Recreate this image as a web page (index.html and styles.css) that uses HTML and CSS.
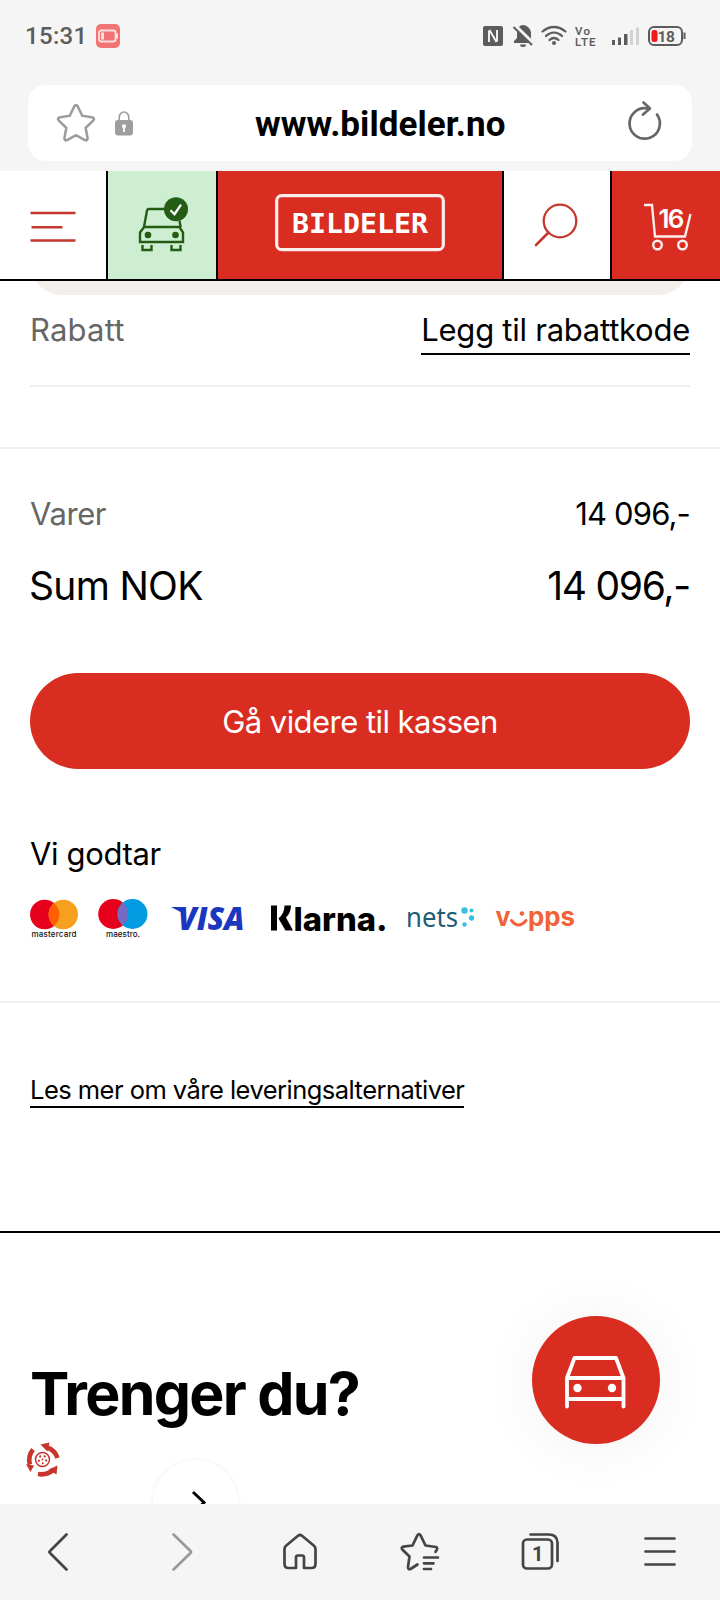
FILE: index.html
```html
<!DOCTYPE html>
<html lang="no">
<head>
<meta charset="utf-8">
<title>Bildeler</title>
<link rel="stylesheet" href="styles.css">
</head>
<body>
<div class="screen">
  <header class="chrome">
    <div class="status">
      <span class="clock">15:31</span>
      <svg class="low" width="24" height="24" viewBox="0 0 24 24"><rect width="24" height="24" rx="5" fill="#f27373"/><rect x="3" y="6.500" width="16.500" height="11" rx="2" fill="none" stroke="#fde0e0" stroke-width="1.800"/><rect x="5" y="8.500" width="3" height="7" fill="#fde0e0"/><rect x="20" y="9.500" width="2" height="5" fill="#fde0e0"/></svg>
      <svg class="tray" width="206" height="24" viewBox="482 24 206 24">
        <rect x="483" y="26" width="20" height="20" rx="2" fill="#5c5c5c"/>
        <path d="M489 42V30.500M489.500 30l7 12M497 41.500V30" fill="none" stroke="#f5f5f5" stroke-width="1.900"/>
        <path d="M514 43v-2l3-3v-5c0-5 3-8 6-8s8 3 8 8v6l3 4z" fill="#5c5c5c"/><path d="M520 44.500h6a3 2.500 0 0 1-6 0z" fill="#5c5c5c"/>
        <path d="M514.500 25.500l18.500 18" stroke="#f5f5f5" stroke-width="4"/><path d="M513.500 27l18.500 18" stroke="#5c5c5c" stroke-width="2"/>
        <g fill="none" stroke="#5c5c5c" stroke-width="2.300" stroke-linecap="round"><path d="M542.500 31.500c7-6 16-6 23 0M546 36c5-4.500 11-4.500 16 0M549.500 40c3-2.600 6-2.600 9 0"/></g><circle cx="554" cy="43" r="2" fill="#5c5c5c"/>
        <text x="575" y="34.500" class="tiny" textLength="15">Vo</text><text x="575" y="45.500" class="tiny" textLength="20.500">LTE</text>
        <path d="M612 40h3v5h-3zM618 37.500h3v7.500h-3zM624 34h3.500v11H624z" fill="#5c5c5c"/><path d="M630 30h3v15h-3zM636 27.500h3v17.500h-3z" fill="#d2d2d2"/>
        <rect x="649" y="27" width="33" height="18" rx="5" fill="none" stroke="#5c5c5c" stroke-width="2"/><rect x="651.500" y="30" width="6" height="12" rx="2.500" fill="#ee1c1c"/><path d="M684.500 32.500v6.500" stroke="#5c5c5c" stroke-width="2"/>
        <text x="657.500" y="41.500" class="pct" textLength="17.500">18</text>
      </svg>
    </div>
    <div class="address">
      <svg class="star" width="40" height="40" viewBox="0 0 40 40"><path d="M18.200 3.500q1.800-3 3.600 0l4.400 9.200 10.500 1.700q2.200 1 .6 2.900l-7.600 7.600 1.900 10.600q-.4 2.500-2.700 1.600L20 32.200l-8.900 4.900q-2.300.9-2.700-1.600l1.900-10.600-7.600-7.600q-1.600-1.900.6-2.900l10.500-1.700z" fill="none" stroke="#9c9c9c" stroke-width="2.600"/></svg>
      <svg class="lock" width="18" height="25" viewBox="0 0 18 25"><path d="M4.200 10V6.500a4.800 5.500 0 0 1 9.600 0V10" fill="none" stroke="#9e9e9e" stroke-width="1.600"/><rect y="9" width="18" height="15.500" rx="3" fill="#9e9e9e"/><circle cx="9" cy="15.300" r="2" fill="#fff"/><path d="M9 15v6" stroke="#fff" stroke-width="1.800"/></svg>
      <span class="url">www.bildeler.no</span>
      <svg class="reload" width="36" height="42" viewBox="0 0 36 42"><path d="M30 14.500A15.200 15.200 0 1 1 20.500 8.500M16.500 2.500l6.500 6-7 6" fill="none" stroke="#666" stroke-width="2.700" stroke-linecap="round" stroke-linejoin="round"/></svg>
    </div>
  </header>

  <nav class="nav">
    <div class="cell"><svg width="46" height="32" viewBox="0 0 46 32"><path d="M0.500 2h45M1.500 16.300h31M0.500 29.500h45" stroke="#c4382e" stroke-width="2.500"/></svg></div>
    <div class="cell green"><svg width="50" height="56" viewBox="0 0 50 56"><g fill="none" stroke="#245c14" stroke-width="2.400"><path d="M6 30l3-16.500q.4-1.500 2-1.500H26M41.500 24l1.200 6M6 30h37M6.500 29.500L2 35.500V45h43V35.500L41.500 30M4.500 48v5h9v-5M33.500 48v5h9v-5"/></g><circle cx="10" cy="38" r="3.300" fill="#245c14"/><circle cx="37.500" cy="38" r="3.300" fill="#245c14"/><circle cx="38" cy="12.200" r="12" fill="#245c14"/><path d="M32.500 13.200l4 4 6.500-9.500" fill="none" stroke="#fff" stroke-width="2.300"/></svg></div>
    <div class="cell red brand"><svg width="170" height="58" viewBox="0 0 170 58"><rect x="1.700" y="1.700" width="166.600" height="54" rx="5" fill="none" stroke="#fdeeee" stroke-width="3.200"/><text x="17" y="38.500" class="logo" textLength="136" lengthAdjust="spacingAndGlyphs">BILDELER</text></svg></div>
    <div class="cell"><svg width="44" height="44" viewBox="0 0 44 44"><circle cx="25" cy="18" r="16.300" fill="none" stroke="#c4382e" stroke-width="2.300"/><path d="M13.500 29.500L1 42" stroke="#c4382e" stroke-width="2.600" stroke-linecap="round"/></svg></div>
    <div class="cell red"><svg width="50" height="48" viewBox="0 0 50 48"><g fill="none" stroke="#fdeeee" stroke-width="2.400"><path d="M1 2h8l3 31.500h30L47.500 11"/><circle cx="14.500" cy="42" r="4.300"/><circle cx="39.500" cy="42" r="4.300"/></g><text x="15.500" y="24.500" class="count" textLength="26">16</text></svg></div>
  </nav>

  <main class="page">
    <div class="basket"><div class="basket-card"></div></div>
    <section class="discount">
      <div class="row discount-row"><span class="muted">Rabatt</span><a class="link code">Legg til rabattkode</a></div>
    </section>
    <section class="summary">
      <div class="row"><span class="muted varer">Varer</span><span class="price">14 096,-</span></div>
      <div class="row total"><span class="sum">Sum NOK</span><span class="sum-price">14 096,-</span></div>
      <button class="checkout">Gå videre til kassen</button>
      <div class="accept">Vi godtar</div>
      <div class="payments">
        <svg width="48" height="40" viewBox="0 0 48 40"><circle cx="14.700" cy="16.500" r="14.700" fill="#e6001c"/><circle cx="33.300" cy="16.500" r="14.700" fill="#f5a01e"/><path d="M24 5.100a14.700 14.700 0 0 1 0 22.800a14.700 14.700 0 0 1 0-22.800z" fill="#ff6000"/><text x="1.500" y="38.500" class="card" textLength="45">mastercard</text></svg>
        <svg class="maestro" width="50" height="40" viewBox="0 0 50 40"><circle cx="15.200" cy="16" r="15" fill="#e6001c"/><circle cx="34.500" cy="16" r="15" fill="#009be1"/><path d="M24.850 4.500a15 15 0 0 1 0 23a15 15 0 0 1 0-23z" fill="#766bc0"/><text x="8" y="38.500" class="card" textLength="34">maestro.</text></svg>
        <svg class="visa" width="75" height="40" viewBox="0 0 75 40"><path d="M1 9h9.500l2 6z" fill="#1b37bd"/><text x="8" y="31.500" class="visa-text" textLength="66.500" lengthAdjust="spacingAndGlyphs">VISA</text></svg>
        <svg class="klarna" width="118" height="40" viewBox="0 0 118 40"><path d="M1 7.500h6v25H1zM14.500 7.500h6.500c0 5-1.700 9-5 12l7 13h-7.500L8.500 20.500c4-3.500 6-7.500 6-13z"/><text x="23.500" y="32.500" class="klarna-text" textLength="94" lengthAdjust="spacingAndGlyphs">larna.</text></svg>
        <svg class="nets" width="70" height="40" viewBox="0 0 70 40"><text x="0" y="29" class="nets-text" textLength="52" lengthAdjust="spacingAndGlyphs">nets</text><g fill="#35bfe3"><circle cx="58.500" cy="12.500" r="3.200"/><circle cx="65.500" cy="12.500" r="2"/><circle cx="65.500" cy="20" r="2.700"/><circle cx="58.500" cy="26.500" r="2.200"/></g></svg>
        <svg class="vipps" width="80" height="40" viewBox="0 0 80 40"><g class="vipps-text"><text x="-0.500" y="28" textLength="15" lengthAdjust="spacingAndGlyphs">v</text><text x="32" y="28" textLength="47" lengthAdjust="spacingAndGlyphs">pps</text></g><path d="M15.500 22.500q7 9 14.500 0" fill="none" stroke="#f26238" stroke-width="3" stroke-linecap="round"/><circle cx="26" cy="15.500" r="2.200" fill="#f26238"/></svg>
      </div>
    </section>
    <section class="delivery"><a class="link delivery-link">Les mer om våre leveringsalternativer</a></section>
    <section class="need">
      <h2>Trenger du?</h2>
      <div class="peek">
        <svg class="wheel" width="34" height="36" viewBox="0 0 34 36"><g fill="none" stroke="#c9352a" stroke-width="4.600"><path d="M20 5q9 3 11.500 11M7 7.500q-5.500 7-3 15M12 32q9 1.500 15-4"/></g><g fill="#c9352a"><path d="M14.500 2.500l9-2-2 9zM0 22l8 1.500-3.500 6.500zM31.500 23.500l-1 9-8-5z"/></g><circle cx="16.500" cy="17.500" r="7" fill="none" stroke="#c9352a" stroke-width="1.500"/><circle cx="16.500" cy="17.500" r="3.800" fill="none" stroke="#c9352a" stroke-width="2" stroke-dasharray="1.800 2.900"/><circle cx="16.500" cy="17.500" r="0.900" fill="#c9352a"/></svg>
        <div class="round"><svg width="16" height="26" viewBox="0 0 16 26"><path d="M2 2l11 10.500L2 24" fill="none" stroke="#000" stroke-width="3"/></svg></div>
      </div>
      <div class="fab"><svg width="62" height="54" viewBox="0 0 62 54"><g fill="none" stroke="#fff" stroke-width="3.800" stroke-linecap="round" stroke-linejoin="round"><path d="M3 23L10.500 3h41.500l7.500 20v28.500M3 23h56.500M3 23v28.500M3 44h56.500"/></g><circle cx="13.500" cy="33" r="4.200" fill="#fff"/><circle cx="48" cy="33" r="4.200" fill="#fff"/></svg></div>
    </section>
  </main>

  <footer class="toolbar">
    <svg viewBox="0 0 40 40"><path d="M26.500 2.500L10 19q-1 1 0 2l16.500 16.500"/></svg>
    <svg class="dim" viewBox="0 0 40 40"><path d="M13.500 2.500L30.500 19q1 1 0 2L13.500 37.500"/></svg>
    <svg viewBox="0 0 40 40"><path d="M16 36V25.500q0-2 2-2h4q2 0 2 2V36h7.500q4 0 4-4V17q0-2-1.500-3.300L22 3.800q-2-1.600-4 0L6 13.700Q4.500 15 4.500 17v15q0 4 4 4z"/></svg>
    <svg viewBox="0 0 40 40"><path d="M17.500 32.500l-7 4.500q-2.500 1-2.500-2l1.500-10.500L2.300 17.500q-1.500-2 .8-2.800L12.500 13.500l5-10.300q1.500-2 3 0l5 10.300 10.500 1.500q1.800.8.900 2.800l-1.400 2M24 25.500h14M24 31.300h9.500M24 37h7"/></svg>
    <svg viewBox="0 0 40 40"><rect x="3" y="7.500" width="29" height="29" rx="4"/><path d="M10.500 2.500H29q8 0 8.500 8V29"/><text x="12" y="29" class="tab-count">1</text></svg>
    <svg viewBox="0 0 40 40"><path d="M5.500 6.500h29M5.500 19.500h29M5.500 32.500h29"/></svg>
  </footer>
</div>
</body>
</html>
```
FILE: styles.css
```css
* { box-sizing: border-box; }
body { margin: 0; background: #fff; color: #000; font-family: Inter, "Liberation Sans", sans-serif; }
svg { display: block; flex: none; overflow: visible; }
.screen { width: 720px; height: 1600px; display: flex; flex-direction: column; overflow: hidden; }

.chrome { flex: none; height: 171px; background: #f5f5f5; padding: 24px 28px 0; }
.status { display: flex; height: 24px; align-items: center; margin: 0 4px 0 -3px; }
.clock { font: 500 24px/24px Roboto, sans-serif; color: #5c5c5c; width: 71px; letter-spacing: 0.3px; }
.tray { margin-left: auto; }
.tiny { font: 500 11.500px Roboto, sans-serif; fill: #5c5c5c; stroke: #5c5c5c; stroke-width: 0.100px; }
.pct { font: 700 15.500px Roboto, sans-serif; fill: #5c5c5c; }
.address { display: flex; align-items: center; height: 76px; margin-top: 37px; padding: 0 29px 0 28px; border-radius: 18px; background: #fff; }
.lock { margin-left: 19px; }
.url { flex: 1; padding: 4px 0 0 122px; font: 700 35px/40px Roboto, sans-serif; letter-spacing: 0.050px; white-space: nowrap; }
.reload { margin: -4px 0 0; }

.nav { flex: none; display: grid; grid-template-columns: 106px 110px 286px 108px 110px; height: 110px; border-bottom: 2px solid #000; }
.cell { display: flex; align-items: center; justify-content: center; }
.cell + .cell { border-left: 2px solid #000; }
.cell:first-child { padding-top: 4px; }
.green { background: #cdeed0; padding-left: 1px; }
.red { background: #da2d21; }
.brand { padding-bottom: 4px; }
.cell:nth-child(5) { padding: 4px 0 0 4px; }
.logo { font: 700 27px "DejaVu Sans Mono", monospace; fill: #fff; }
.count { font: 600 26px Inter, sans-serif; fill: #fff; }

.page { flex: 1; min-height: 0; overflow: hidden; }
.basket { height: 14px; margin: 0 30px; overflow: hidden; display: flex; align-items: flex-end; }
.basket-card { flex: 1 0 0; height: 64px; background: #f3f0eb; border-radius: 32px; }
.row { display: flex; justify-content: space-between; font-size: 31px; line-height: 42px; height: 40px; }
.discount { height: 154px; padding: 14px 30px 0; border-bottom: 2px solid #f1f0ed; }
.discount-row { height: 78px; border-bottom: 2px solid #f3f0eb; align-items: flex-start; }
.muted { color: #666; letter-spacing: 0.200px; }
.varer { letter-spacing: -0.4px; }
.link { border-bottom: 2px solid #000; white-space: nowrap; }
.code { height: 46px; letter-spacing: -0.250px; }
.summary { height: 554px; padding: 44px 30px 0; border-bottom: 2px solid #f0f0ee; }
.price { letter-spacing: -0.850px; }
.total { margin-top: 29px; height: 48px; font-size: 39px; line-height: 48px; letter-spacing: -0.700px; }
.sum { margin-left: -1px; }
.sum-price { letter-spacing: -1.250px; }
.checkout { display: block; width: 660px; height: 96px; margin-top: 63px; padding: 2px 0 0; border: 0; border-radius: 48px; background: #da2d21; color: #fff; font: 400 31px/40px Inter, sans-serif; letter-spacing: -0.550px; }
.accept { margin-top: 64px; height: 40px; font-size: 31px; line-height: 42px; letter-spacing: -0.350px; }
.payments { display: flex; margin-top: 25px; height: 40px; }
.maestro { margin-left: 20px; }
.visa { margin-left: 22px; }
.klarna { margin-left: 25px; }
.nets { margin-left: 18px; }
.vipps { margin-left: 20px; }
.card { font: 500 8px Inter, sans-serif; fill: #111; }
.visa-text { font: italic 800 31px "Open Sans", sans-serif; fill: #1b37bd; }
.klarna-text { font: 800 33px Inter, sans-serif; }
.nets-text { font: 400 28px "Noto Sans", sans-serif; fill: #1f5c78; }
.vipps-text { font: 700 26px Inter, sans-serif; fill: #f26238; }
.delivery { height: 230px; padding: 71px 30px 0; border-bottom: 2px solid #000; }
.delivery-link { display: inline-block; font-size: 25.500px; line-height: 32px; letter-spacing: -0.530px; }
.need { position: relative; padding: 125px 30px 0; }
h2 { margin: 0; font-size: 59px; line-height: 72px; font-weight: 700; letter-spacing: -1.700px; }
.peek { position: relative; height: 80px; padding-top: 12px; }
.wheel { margin-left: -4px; }
.round { position: absolute; left: 123px; top: 30px; width: 85px; height: 86px; border-radius: 50%; background: #fff; box-shadow: 0 0 5px rgba(0,0,0,.07); padding: 30px 0 0 38px; }
.fab { position: absolute; left: 532px; top: 83px; width: 128px; height: 128px; border-radius: 50%; background: #da2d21; display: flex; align-items: center; justify-content: center; padding: 4px 2px 0 0; box-shadow: 0 2px 60px rgba(0,0,0,.06); }

.toolbar { flex: none; height: 96px; background: #f5f5f5; display: grid; grid-template-columns: repeat(6, 120px); justify-items: center; padding-top: 28px; }
.toolbar svg { width: 40px; height: 40px; fill: none; stroke: #444; stroke-width: 2.700; stroke-linecap: round; stroke-linejoin: round; }
.toolbar .dim { stroke: #9a9a9a; }
.toolbar .tab-count { font: 700 20px Roboto, sans-serif; fill: #444; stroke: none; }
```
